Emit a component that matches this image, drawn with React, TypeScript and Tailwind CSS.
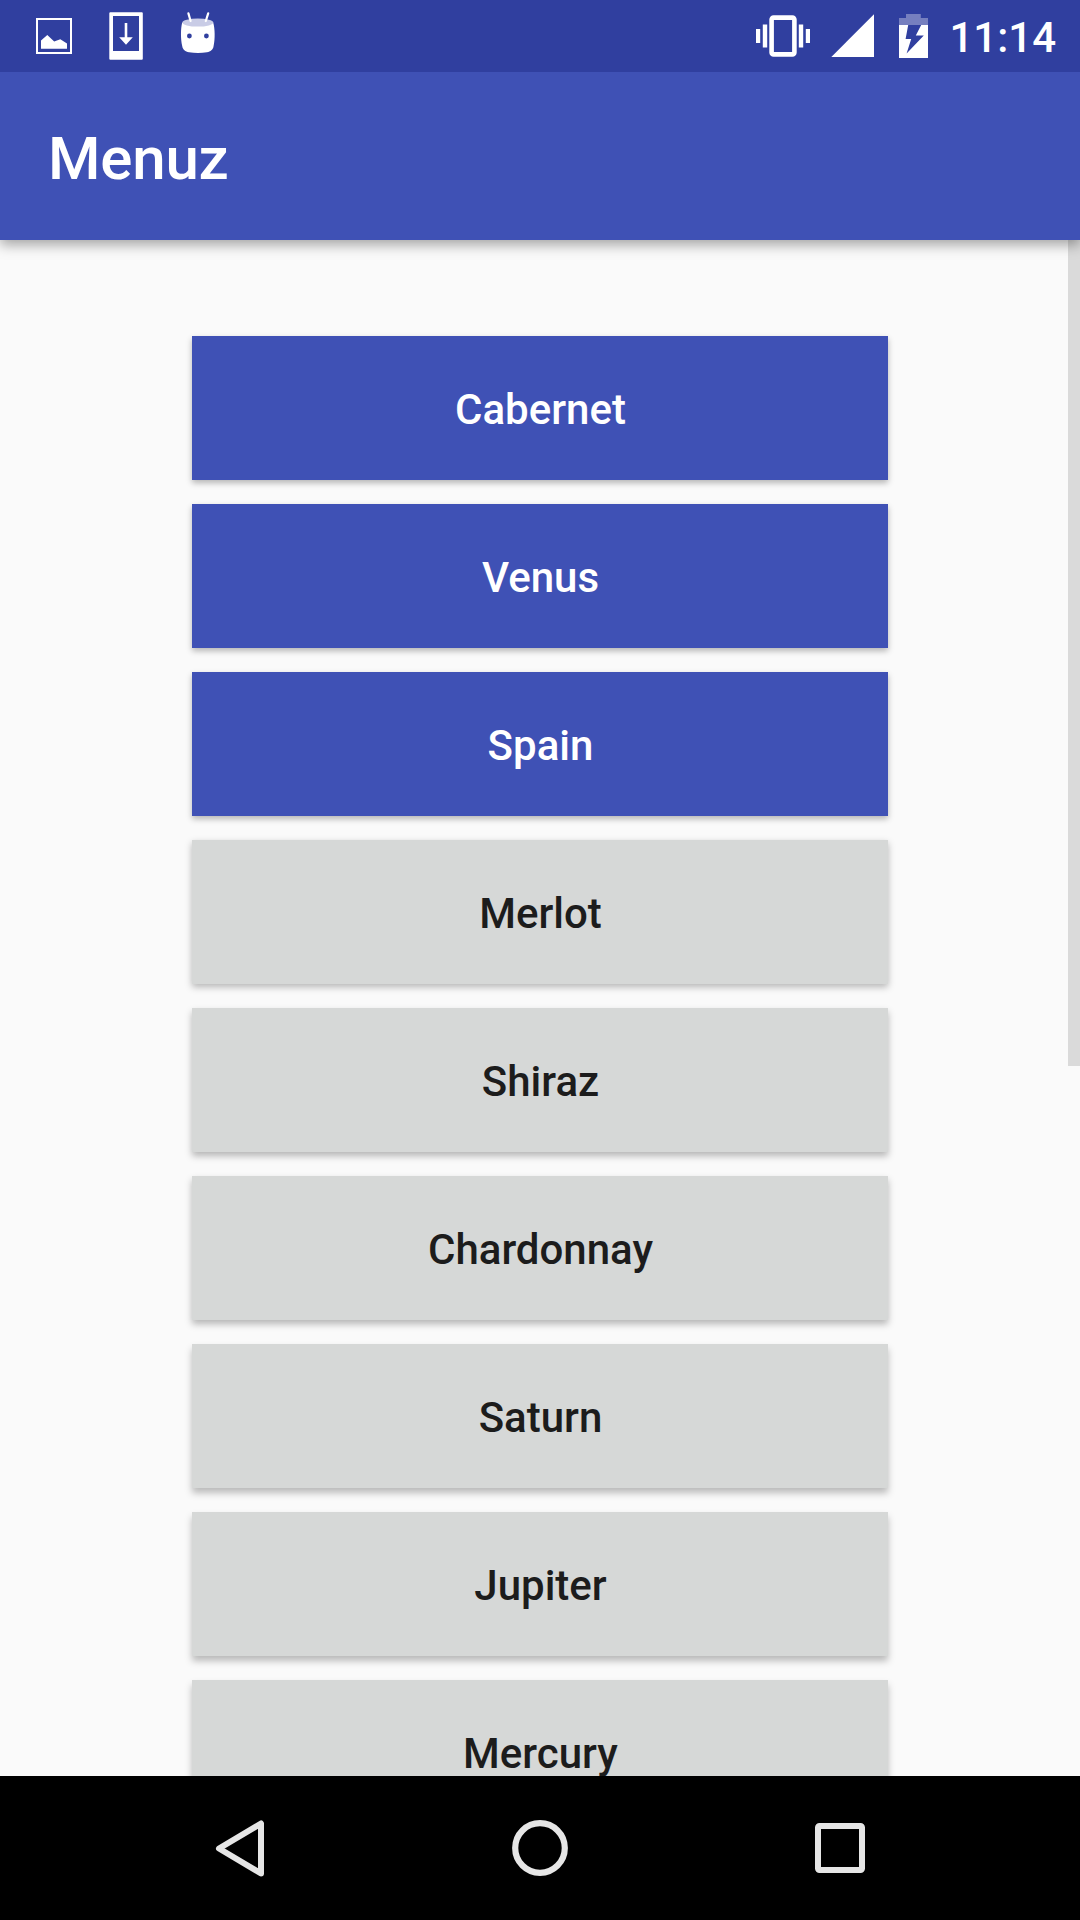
import React from "react";

const items = [
  { name: "Cabernet", selected: true, shadow: "shadow-[0_3px_6px_rgba(0,0,0,0.28)]" },
  { name: "Venus", selected: true, shadow: "shadow-[0_3px_6px_rgba(0,0,0,0.28)]" },
  { name: "Spain", selected: true, shadow: "shadow-[0_3px_6px_rgba(0,0,0,0.28)]" },
  { name: "Merlot", selected: false, shadow: "shadow-[0_3px_7px_rgba(0,0,0,0.28)]" },
  { name: "Shiraz", selected: false, shadow: "shadow-[0_4px_7px_rgba(0,0,0,0.28)]" },
  { name: "Chardonnay", selected: false, shadow: "shadow-[0_4px_7px_rgba(0,0,0,0.28)]" },
  { name: "Saturn", selected: false, shadow: "shadow-[0_5px_7px_rgba(0,0,0,0.26)]" },
  { name: "Jupiter", selected: false, shadow: "shadow-[0_5px_7px_rgba(0,0,0,0.26)]" },
  { name: "Mercury", selected: false, shadow: "shadow-[0_5px_7px_rgba(0,0,0,0.26)]" },
];

function PictureIcon() {
  return (
    <svg className="h-[72px] w-[72px]" viewBox="0 0 72 72" fill="none">
      <rect x="19" y="19" width="34" height="34" stroke="#fff" strokeWidth="2" />
      <path d="M23 48.8V40.5L29.3 35L36.2 41.6L42.3 39.3L49 43.6V48.8Z" fill="#fff" />
    </svg>
  );
}

function DownloadIcon() {
  return (
    <svg className="h-[72px] w-[72px]" viewBox="0 0 72 72" fill="none">
      <path
        fillRule="evenodd"
        d="M20.3 12.3H51.8a1 1 0 0 1 1 1V58.8a1 1 0 0 1-1 1H20.3a1 1 0 0 1-1-1V13.3a1 1 0 0 1 1-1ZM23 16V51H49V16Z"
        fill="#fff"
      />
      <path d="M34.7 23H37.3V37.3H42.8L36 44.7L29.2 37.3H34.7Z" fill="#fff" />
    </svg>
  );
}

function AndroidHeadIcon() {
  return (
    <svg className="h-[72px] w-[72px]" viewBox="0 0 72 72" fill="none">
      <path
        d="M20.2 22.6C25 25.8 47 25.8 51.2 22.6C53 29 53.2 39 51.6 46C51 50 48.5 51.6 45 52.2C39 53.2 33 53.2 27 52.2C23.2 51.6 20.9 50 20.2 46C18.6 39 18.6 29 20.2 22.6Z"
        fill="#fff"
      />
      <ellipse cx="35.8" cy="22.6" rx="15.5" ry="4" fill="#c9cce6" />
      <path d="M26.4 13.4L28.6 21M46.2 13.4L43.8 21" stroke="#fff" strokeWidth="2.2" strokeLinecap="round" />
      <circle cx="27.4" cy="36" r="2.4" fill="#303f9f" />
      <circle cx="44.4" cy="36" r="2.4" fill="#303f9f" />
    </svg>
  );
}

function VibrateIcon() {
  return (
    <svg className="h-[72px] w-[54px]" viewBox="0 0 54 72" fill="none">
      <rect x="15.6" y="17.6" width="22.8" height="36.8" rx="2" stroke="#fff" strokeWidth="4.6" />
      <path d="M0 29H4.2V43H0ZM6.8 24.5H11.2V47.5H6.8ZM42.8 24.5H47.2V47.5H42.8ZM49.8 29H54V43H49.8Z" fill="#fff" />
    </svg>
  );
}

function SignalIcon() {
  return (
    <svg className="ml-[21px] h-[72px] w-[43px]" viewBox="0 0 43 72">
      <path d="M0.3 57L43 14.2V57Z" fill="#fff" />
    </svg>
  );
}

function BatteryIcon() {
  return (
    <svg className="ml-[25px] h-[72px] w-[29px]" viewBox="0 0 29 72">
      <path d="M0 25V18H7V14H21.8V18H29V25Z" fill="#767fbf" />
      <path fillRule="evenodd" d="M0 25H29V58H0ZM9.2 25L6.6 39H12.2L7.6 53.5L24.8 35.6H16.8L22.2 25Z" fill="#fff" />
    </svg>
  );
}

function StatusBar() {
  return (
    <div className="z-20 flex h-[72px] shrink-0 items-center justify-between bg-[#303f9f] pl-[18px] pr-6">
      <div className="flex">
        <PictureIcon />
        <DownloadIcon />
        <AndroidHeadIcon />
      </div>
      <div className="flex items-center">
        <VibrateIcon />
        <SignalIcon />
        <BatteryIcon />
        <span className="ml-[21px] pt-[3px] text-[42px] font-medium leading-[72px] text-white">11:14</span>
      </div>
    </div>
  );
}

function NavigationBar() {
  return (
    <nav className="z-10 flex h-36 shrink-0 items-center justify-between bg-black px-[180px]">
      <svg className="h-[120px] w-[120px]" viewBox="0 0 120 120" fill="none" stroke="#e6e6e6">
        <path d="M39 60.5L81 35.5V85.5Z" strokeWidth="6" strokeLinejoin="round" />
      </svg>
      <svg className="h-[120px] w-[120px]" viewBox="0 0 120 120" fill="none" stroke="#e6e6e6">
        <circle cx="60" cy="60" r="24.8" strokeWidth="6.2" />
      </svg>
      <svg className="h-[120px] w-[120px]" viewBox="0 0 120 120" fill="none" stroke="#e6e6e6">
        <rect x="38" y="38" width="44" height="44" rx="1.5" strokeWidth="6" />
      </svg>
    </nav>
  );
}

export default function App() {
  return (
    <div className="flex h-[1920px] w-[1080px] flex-col overflow-hidden bg-[#fafafa] font-['Roboto',sans-serif]">
      <StatusBar />
      <header className="z-10 flex h-[168px] shrink-0 items-center bg-[#3f51b5] px-12 pt-[5px] shadow-[0_5px_12px_rgba(0,0,0,0.34)]">
        <h1 className="text-[60px] font-medium leading-none tracking-[-0.2px] text-white">Menuz</h1>
      </header>
      <main className="flex min-h-0 flex-1 justify-between overflow-hidden pl-48">
        <div className="flex w-[696px] flex-col gap-6 pt-24">
          {items.map((item) => (
            <button
              key={item.name}
              className={`h-36 shrink-0 pl-px pt-[3px] text-[42px] font-medium ${item.shadow} ${
                item.selected ? "bg-[#3f51b5] text-white" : "bg-[#d6d8d7] text-[#1c1c1c]"
              }`}
            >
              {item.name}
            </button>
          ))}
        </div>
        <div className="h-[826px] w-3 bg-[#dadada]" />
      </main>
      <NavigationBar />
    </div>
  );
}
